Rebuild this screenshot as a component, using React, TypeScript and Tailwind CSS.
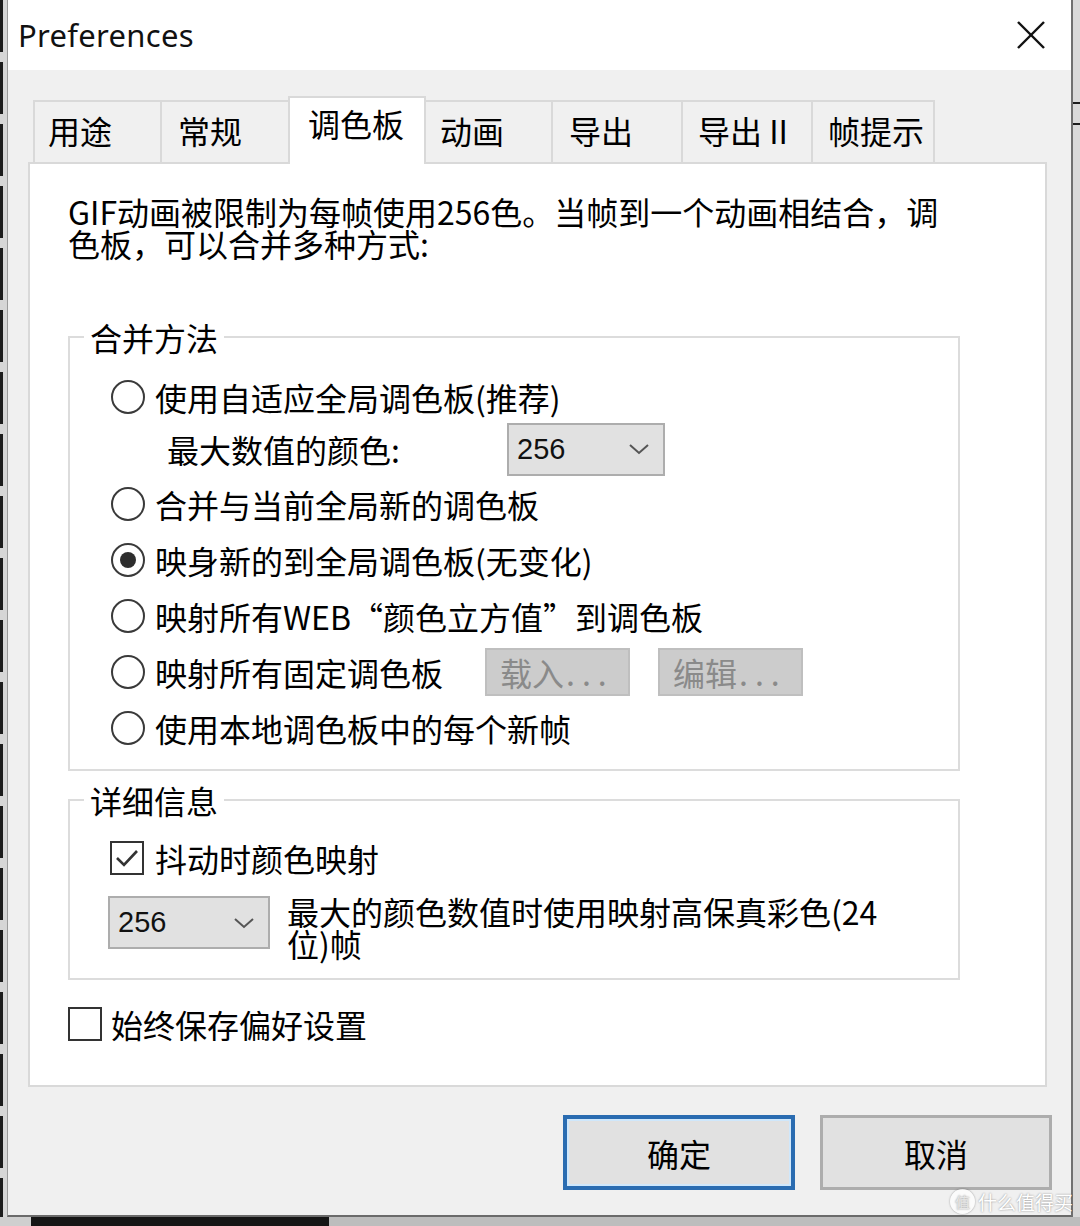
import React from "react";

function Radio({ checked = false }: { checked?: boolean }) {
  return (
    <span className="w-[34px] h-[34px] shrink-0 rounded-full border-[2.5px] border-[#3a3a3a] bg-white flex items-center justify-center">
      {checked && <span className="w-[16px] h-[16px] rounded-full bg-[#2e2e2e]" />}
    </span>
  );
}

function Check({ checked = false }: { checked?: boolean }) {
  return (
    <span className="w-[34px] h-[34px] shrink-0 border-2 border-[#333333] bg-white flex items-center justify-center">
      {checked && (
        <svg width="26" height="22" viewBox="0 0 26 22">
          <polyline points="3,11 10,18 23,4" fill="none" stroke="#333333" strokeWidth="2.6" />
        </svg>
      )}
    </span>
  );
}

function Combo({ w }: { w: string }) {
  return (
    <div className={`${w} h-[53px] shrink-0 bg-[#e1e1e1] border-2 border-[#adadad] flex items-center justify-between pl-[8px] pr-[13px]`}>
      <span className="font-['Liberation_Sans',sans-serif] text-[29px] leading-none text-[#111]">256</span>
      <svg width="22" height="14" viewBox="0 0 22 14">
        <polyline points="2,3 11,11 20,3" fill="none" stroke="#555555" strokeWidth="2" />
      </svg>
    </div>
  );
}

function DisabledBtn({ label }: { label: string }) {
  return (
    <div className="w-[145px] h-[48px] shrink-0 bg-[#cccccc] border-2 border-[#bfbfbf] flex items-center pl-[13px] text-[32px] leading-none text-[#8a8a8a]">
      {label}
      <span className="tracking-[7px] ml-[2px]">...</span>
    </div>
  );
}

export default function App() {
  return (
    <div className="w-[1080px] h-[1226px] relative overflow-hidden bg-[#cfcfcf] font-['Noto_Sans_CJK_SC',sans-serif] text-black">
      <div className="flex h-[1217px]">
        {/* left strip */}
        <div className="w-[7px] h-full bg-[#d6d6d6]">
          <div className="w-[3px] h-full bg-[repeating-linear-gradient(to_bottom,#1c1c1c_0px,#1c1c1c_52px,#d6d6d6_52px,#d6d6d6_62px)]" />
        </div>

        {/* dialog */}
        <div className="w-[1066px] h-full flex flex-col border-l border-l-[#9a9a9a] border-r-2 border-r-[#707070] border-b-2 border-b-[#6a6a6a]">
          {/* title bar */}
          <div className="h-[70px] shrink-0 bg-white flex items-center justify-between pl-[10px] pr-[25px]">
            <span className="font-['Noto_Sans',sans-serif] text-[31px] leading-none text-[#111] tracking-[0.3px]">Preferences</span>
            <svg width="30" height="30" viewBox="0 0 30 30">
              <line x1="2" y1="2" x2="28" y2="28" stroke="#111" strokeWidth="2.4" />
              <line x1="28" y1="2" x2="2" y2="28" stroke="#111" strokeWidth="2.4" />
            </svg>
          </div>

          {/* body */}
          <div className="flex-1 bg-[#f0f0f0] pt-[26px] flex flex-col">
            {/* tabs */}
            <div className="flex items-end h-[66px] pl-[25px]">
              <div className="w-[127px] h-[62px] border-l-2 border-t-2 border-[#d9d9d9] pl-[13px] pt-[10px] text-[32px] leading-[36px]">用途</div>
              <div className="w-[128px] h-[62px] border-l-2 border-t-2 border-[#d9d9d9] pl-[16px] pt-[10px] text-[32px] leading-[36px]">常规</div>
              <div className="w-[138px] h-[68px] -mb-[2px] relative z-10 bg-white border-l-2 border-t-2 border-r-2 border-[#d9d9d9] pl-[18px] pt-[7px] text-[32px] leading-[36px]">调色板</div>
              <div className="w-[125px] h-[62px] border-t-2 border-[#d9d9d9] pl-[14px] pt-[10px] text-[32px] leading-[36px]">动画</div>
              <div className="w-[130px] h-[62px] border-l-2 border-t-2 border-[#d9d9d9] pl-[16px] pt-[10px] text-[32px] leading-[36px]">导出</div>
              <div className="w-[130px] h-[62px] border-l-2 border-t-2 border-[#d9d9d9] pl-[15px] pt-[10px] text-[32px] leading-[36px]">导出 II</div>
              <div className="w-[124px] h-[62px] border-l-2 border-t-2 border-r-2 border-[#d9d9d9] pl-[15px] pt-[10px] text-[32px] leading-[36px]">帧提示</div>
            </div>

            {/* panel */}
            <div className="ml-[20px] w-[1019px] h-[925px] bg-white border-2 border-[#d9d9d9] flex flex-col">
              <p className="ml-[38px] mt-[31px] text-[32px] leading-[32px] whitespace-nowrap">
                GIF动画被限制为每帧使用256色。当帧到一个动画相结合，调
                <br />
                色板，可以合并多种方式:
              </p>

              <fieldset className="ml-[38px] mt-[60px] w-[892px] border-2 border-[#dcdcdc] pt-[17px] pb-[13px]">
                <legend className="ml-[14px] px-[6px] text-[32px] leading-[36px]">合并方法</legend>
                <div className="flex items-center h-[50px] pl-[41px] gap-[10px] text-[32px] leading-none">
                  <Radio />
                  <span>使用自适应全局调色板(推荐)</span>
                </div>
                <div className="flex items-center h-[54px] pl-[97px] text-[32px] leading-none">
                  <span className="w-[340px]">最大数值的颜色:</span>
                  <Combo w="w-[158px]" />
                </div>
                <div className="flex items-center h-[56px] pl-[41px] gap-[10px] text-[32px] leading-none">
                  <Radio />
                  <span>合并与当前全局新的调色板</span>
                </div>
                <div className="flex items-center h-[56px] pl-[41px] gap-[10px] text-[32px] leading-none">
                  <Radio checked />
                  <span>映身新的到全局调色板(无变化)</span>
                </div>
                <div className="flex items-center h-[56px] pl-[41px] gap-[10px] text-[32px] leading-none">
                  <Radio />
                  <span>映射所有WEB“颜色立方值”到调色板</span>
                </div>
                <div className="flex items-center h-[56px] pl-[41px] text-[32px] leading-none">
                  <Radio />
                  <span className="ml-[10px]">映射所有固定调色板</span>
                  <div className="ml-[42px]">
                    <DisabledBtn label="载入" />
                  </div>
                  <div className="ml-[28px]">
                    <DisabledBtn label="编辑" />
                  </div>
                </div>
                <div className="flex items-center h-[56px] pl-[41px] gap-[10px] text-[32px] leading-none">
                  <Radio />
                  <span>使用本地调色板中的每个新帧</span>
                </div>
              </fieldset>

              <fieldset className="ml-[38px] mt-[11px] w-[892px] border-2 border-[#dcdcdc] pt-[15px] pb-[19px]">
                <legend className="ml-[14px] px-[6px] text-[32px] leading-[36px]">详细信息</legend>
                <div className="flex items-center h-[50px] pl-[40px] gap-[11px] text-[32px] leading-none">
                  <Check checked />
                  <span>抖动时颜色映射</span>
                </div>
                <div className="mt-[13px] flex items-start pl-[38px]">
                  <Combo w="w-[162px]" />
                  <p className="ml-[17px] -mt-[1px] text-[32px] leading-[32px] whitespace-nowrap">
                    最大的颜色数值时使用映射高保真彩色(24
                    <br />
                    位)帧
                  </p>
                </div>
              </fieldset>

              <div className="mt-[24px] h-[40px] flex items-center pl-[38px] gap-[9px] text-[32px] leading-none">
                <Check />
                <span>始终保存偏好设置</span>
              </div>
            </div>

            {/* buttons */}
            <div className="mt-[28px] flex justify-end gap-[25px] pr-[19px]">
              <div className="w-[232px] h-[75px] bg-[#e1e1e1] border-[4px] border-[#2a6cb1] shadow-[inset_0_0_0_2px_#cfe7fb] flex items-center justify-center text-[32px] leading-none">
                确定
              </div>
              <div className="w-[232px] h-[75px] bg-[#e1e1e1] border-[3px] border-[#adadad] flex items-center justify-center text-[32px] leading-none">
                取消
              </div>
            </div>
          </div>
        </div>

        {/* right strip */}
        <div className="w-[7px] h-full bg-[#d9d9d9] flex flex-col">
          <div className="h-[102px]" />
          <div className="h-[2px] bg-[#1c1c1c]" />
          <div className="h-[19px]" />
          <div className="h-[2px] bg-[#1c1c1c]" />
        </div>
      </div>

      {/* bottom strip */}
      <div className="flex h-[9px]">
        <div className="w-[31px] bg-[#cfcfcf]" />
        <div className="w-[298px] bg-[#161616]" />
        <div className="flex-1 bg-[#bdbdbd]" />
      </div>

      {/* watermark */}
      <div className="absolute left-[950px] top-[1189px] flex items-center gap-[3px] text-white [text-shadow:0_0_2px_rgba(0,0,0,0.45)]">
        <span className="w-[25px] h-[25px] rounded-full bg-white/70 shadow-[0_0_2px_rgba(0,0,0,0.4)] flex items-center justify-center text-[15px] leading-none text-[#e6e6e6]">
          值
        </span>
        <span className="text-[19px] leading-none">什么值得买</span>
      </div>
    </div>
  );
}
